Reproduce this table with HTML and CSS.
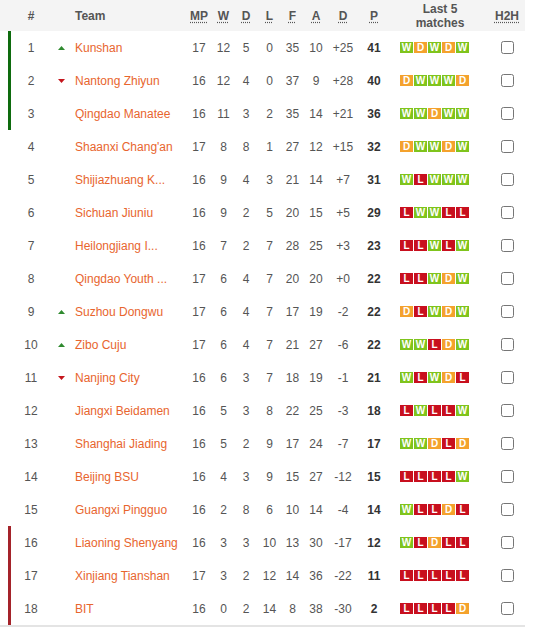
FILE: index.html
```html
<!DOCTYPE html>
<html>
<head>
<meta charset="utf-8">
<link rel="stylesheet" href="styles.css">
</head>
<body>
<div class="table">
  <div class="row head">
    <span class="sp"></span><span class="bar"></span>
    <span class="c rank">#</span><span class="c arrow"></span>
    <span class="c team">Team</span>
    <span class="c"><abbr title="Matches played">MP</abbr></span>
    <span class="c"><abbr title="Wins">W</abbr></span>
    <span class="c"><abbr title="Draws">D</abbr></span>
    <span class="c"><abbr title="Losses">L</abbr></span>
    <span class="c"><abbr title="Goals for">F</abbr></span>
    <span class="c"><abbr title="Goals against">A</abbr></span>
    <span class="c"><abbr title="Goal difference">D</abbr></span>
    <span class="c"><abbr title="Points">P</abbr></span>
    <span class="c last5h">Last 5<br>matches</span>
    <span class="c"><abbr title="Head to head">H2H</abbr></span>
  </div>
  <div id="rows"></div>
</div>
<script src="app.js"></script>
</body>
</html>
```
FILE: app.js
```js
var data = [
  [1,"up","Kunshan",17,12,5,0,35,10,"+25",41,"WDWDW","promo"],
  [2,"down","Nantong Zhiyun",16,12,4,0,37,9,"+28",40,"DWWWD","promo"],
  [3,"","Qingdao Manatee",16,11,3,2,35,14,"+21",36,"WWDWW","promo"],
  [4,"","Shaanxi Chang'an",17,8,8,1,27,12,"+15",32,"DWWDW",""],
  [5,"","Shijiazhuang K...",16,9,4,3,21,14,"+7",31,"WLWWW",""],
  [6,"","Sichuan Jiuniu",16,9,2,5,20,15,"+5",29,"LWWLL",""],
  [7,"","Heilongjiang I...",16,7,2,7,28,25,"+3",23,"LLWLW",""],
  [8,"","Qingdao Youth ...",17,6,4,7,20,20,"+0",22,"LLWDW",""],
  [9,"up","Suzhou Dongwu",17,6,4,7,17,19,"-2",22,"DLWDW",""],
  [10,"up","Zibo Cuju",17,6,4,7,21,27,"-6",22,"WWLDW",""],
  [11,"down","Nanjing City",16,6,3,7,18,19,"-1",21,"WLWDL",""],
  [12,"","Jiangxi Beidamen",16,5,3,8,22,25,"-3",18,"LWLLW",""],
  [13,"","Shanghai Jiading",16,5,2,9,17,24,"-7",17,"WWDLD",""],
  [14,"","Beijing BSU",16,4,3,9,15,27,"-12",15,"LLLLW",""],
  [15,"","Guangxi Pingguo",16,2,8,6,10,14,"-4",14,"WLLDL",""],
  [16,"","Liaoning Shenyang",16,3,3,10,13,30,"-17",12,"WLDLL","releg"],
  [17,"","Xinjiang Tianshan",17,3,2,12,14,36,"-22",11,"LLLLL","releg"],
  [18,"","BIT",16,0,2,14,8,38,"-30",2,"LLLLD","releg"]
];
var up = '<svg width="7" height="4" viewBox="0 0 7 4"><path d="M0 4L3.5 0L7 4Z" fill="#2f8a2f"/></svg>';
var down = '<svg width="7" height="4" viewBox="0 0 7 4"><path d="M0 0L3.5 4L7 0Z" fill="#c5161d"/></svg>';
var html = "";
data.forEach(function (r) {
  var form = r[11].split("").map(function (c) {
    return '<span class="b b' + c + '">' + c + '</span>';
  }).join("");
  html += '<div class="row ' + r[12] + '">' +
    '<span class="sp"></span><span class="bar"></span>' +
    '<span class="c rank">' + r[0] + '</span>' +
    '<span class="c arrow">' + (r[1] === "up" ? up : r[1] === "down" ? down : "") + '</span>' +
    '<span class="c team">' + r[2] + '</span>' +
    '<span class="c">' + r[3] + '</span>' +
    '<span class="c">' + r[4] + '</span>' +
    '<span class="c">' + r[5] + '</span>' +
    '<span class="c">' + r[6] + '</span>' +
    '<span class="c">' + r[7] + '</span>' +
    '<span class="c">' + r[8] + '</span>' +
    '<span class="c">' + r[9] + '</span>' +
    '<span class="c pts">' + r[10] + '</span>' +
    '<span class="c form">' + form + '</span>' +
    '<span class="c"><input type="checkbox" class="chk"></span>' +
    '</div>';
});
document.getElementById("rows").innerHTML = html;
```
FILE: styles.css
```css
html, body {
  margin: 0;
  padding: 0;
  background: #fff;
}
body {
  font-family: "Liberation Sans", Arial, sans-serif;
  font-size: 12px;
  color: #555;
}
.table {
  width: 525px;
  border-bottom: 2px solid #e4e4e4;
}
.row {
  display: grid;
  grid-template-columns: 8px 3px 40px 21px 114px 26px 23px 22px 25px 21px 26px 28px 34px 98px 36px;
  height: 33px;
  align-items: stretch;
}
.row.head {
  height: 31px;
  background: #f4f4f4;
  font-weight: bold;
  color: #555;
}
.c {
  display: flex;
  align-items: center;
  justify-content: center;
  white-space: nowrap;
}
.head .c {
  line-height: 14px;
  text-align: center;
}
abbr {
  text-decoration: underline dotted;
  text-underline-offset: 2px;
  cursor: help;
}
.team {
  justify-content: flex-start;
  padding-left: 3px;
  color: #e8652e;
  overflow: hidden;
}
.head .team {
  color: #555;
}
.promo .bar {
  background: #0e6b0e;
}
.releg .bar {
  background: #a4232a;
}
.pts {
  font-weight: bold;
  color: #333;
}
.form {
  justify-content: flex-start;
  padding-left: 9px;
  gap: 1px;
}
.b {
  width: 13px;
  height: 11px;
  display: flex;
  align-items: center;
  justify-content: center;
  color: #fff;
  font-weight: bold;
  font-size: 10px;
}
.bW { background: #7fc41d; }
.bD { background: #f4a22d; }
.bL { background: #c80f1e; }
.chk {
  margin: 0;
  width: 13px;
  height: 13px;
}
```
